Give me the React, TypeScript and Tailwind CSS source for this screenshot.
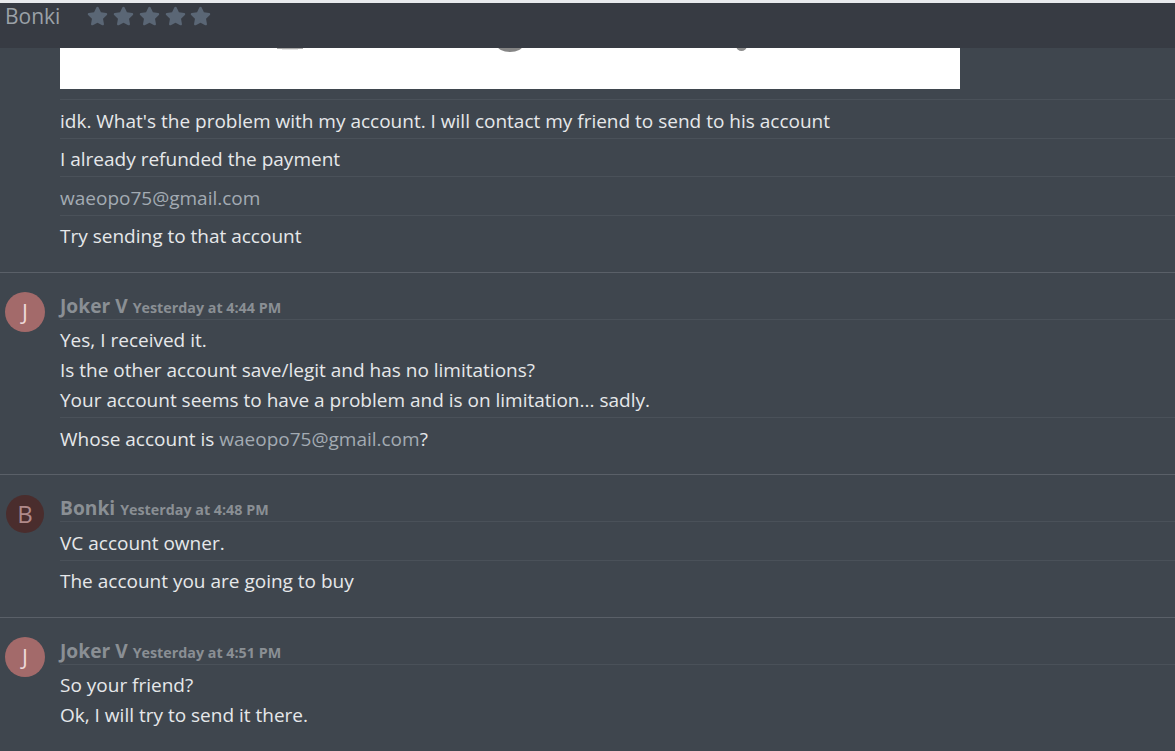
import { FaStar } from "react-icons/fa";

type Row = { lines: React.ReactNode[] };

function Link({ children }: { children: React.ReactNode }) {
    return <span className="text-[#a3abb3]">{children}</span>;
}

function Rows({ rows }: { rows: Row[] }) {
    return (
        <div>
            {rows.map((row, i) => (
                <div key={i} className="border-t border-[#4a5159] pt-[5.5px] pb-[2px]">
                    {row.lines.map((line, j) => (
                        <div key={j} className="h-[30px] leading-[30px] whitespace-nowrap">
                            {line}
                        </div>
                    ))}
                </div>
            ))}
        </div>
    );
}

function Message({
    name,
    time,
    initial,
    avatarClass,
    rows,
}: {
    name: string;
    time: string;
    initial: string;
    avatarClass: string;
    rows: Row[];
}) {
    return (
        <section className="border-t border-[#5a6068] flex pb-[18.5px]">
            <div className="w-[60px] pl-[5px] pt-[19px] shrink-0">
                <div className={`rounded-full flex items-center justify-center ${avatarClass}`}>{initial}</div>
            </div>
            <div className="flex-1">
                <div className="h-[46px] pt-[19px] flex items-baseline gap-[5px] text-[#8a8f94] font-bold whitespace-nowrap">
                    <span className="text-[19.2px] leading-[28px]">{name}</span>
                    <span className="text-[14.3px]">{time}</span>
                </div>
                <Rows rows={rows} />
            </div>
        </section>
    );
}

export default function App() {
    return (
        <div className="h-[751px] overflow-hidden bg-[#3f464e] text-[#e6e8ea] text-[19px] font-['Open_Sans','Noto_Sans',sans-serif]">
            <div className="h-[3px] bg-[#e8eaed]" />
            <header className="h-[45px] bg-[#373b43] flex items-start">
                <span className="ml-[5px] text-[21px] leading-[26px] text-[#9ba1a7]">Bonki</span>
                <div className="ml-[27px] mt-[3px] flex gap-[4.75px] text-[#5a6675]">
                    {[0, 1, 2, 3, 4].map((i) => (
                        <FaStar key={i} className="w-[21px] h-[20px]" />
                    ))}
                </div>
            </header>
            <div className="ml-[60px] w-[900px] h-[41px] bg-white overflow-hidden">
                <svg width="900" height="41" viewBox="0 0 900 41">
                    <rect x="217" y="0" width="26" height="1" fill="#a8a8a8" />
                    <rect x="222" y="1" width="16" height="1" fill="#e4e4e4" />
                    <ellipse cx="450" cy="-3" rx="13" ry="7" fill="#858585" />
                    <ellipse cx="681.5" cy="-1" rx="5" ry="4" fill="#8c8c8c" />
                </svg>
            </div>
            <div className="pl-[60px] pt-[10px] pb-[18.5px]">
                <Rows
                    rows={[
                        { lines: ["idk. What's the problem with my account. I will contact my friend to send to his account"] },
                        { lines: ["I already refunded the payment"] },
                        { lines: [<Link>waeopo75@gmail.com</Link>] },
                        { lines: ["Try sending to that account"] },
                    ]}
                />
            </div>
            <Message
                name="Joker V"
                time="Yesterday at 4:44 PM"
                initial="J"
                avatarClass="w-10 h-10 text-[22px] bg-[#a36a6a] text-[#eed9d9]"
                rows={[
                    {
                        lines: [
                            "Yes, I received it.",
                            "Is the other account save/legit and has no limitations?",
                            "Your account seems to have a problem and is on limitation... sadly.",
                        ],
                    },
                    {
                        lines: [
                            <>
                                Whose account is <Link>waeopo75@gmail.com</Link>?
                            </>,
                        ],
                    },
                ]}
            />
            <Message
                name="Bonki"
                time="Yesterday at 4:48 PM"
                initial="B"
                avatarClass="w-[38px] h-[38px] ml-[1px] mt-[1px] text-[24px] bg-[#4a2d2d] text-[#b08a8a]"
                rows={[{ lines: ["VC account owner."] }, { lines: ["The account you are going to buy"] }]}
            />
            <Message
                name="Joker V"
                time="Yesterday at 4:51 PM"
                initial="J"
                avatarClass="w-10 h-10 text-[22px] bg-[#a36a6a] text-[#eed9d9]"
                rows={[{ lines: ["So your friend?", "Ok, I will try to send it there."] }]}
            />
        </div>
    );
}
